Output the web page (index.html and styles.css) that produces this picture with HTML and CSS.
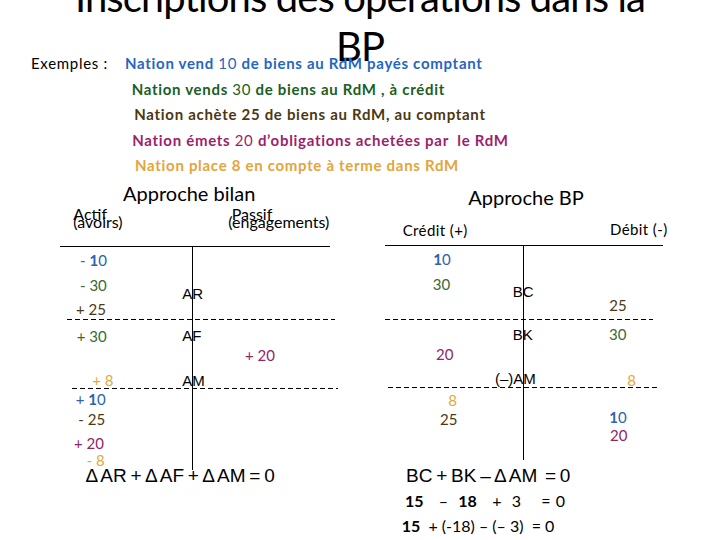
FILE: index.html
```html
<!DOCTYPE html>
<html lang="fr">
<head>
<meta charset="utf-8">
<title>Inscriptions des opérations dans la BP</title>
<link rel="stylesheet" href="styles.css">
</head>
<body>
<div class="slide">
  <h1 class="title">Inscriptions des opérations dans la<br>BP</h1>

  <div class="examples">
    <p class="ex ex--1"><span class="ex-label">Exemples :</span><span class="c-blue">Nation vend <span class="num">10</span> de biens au RdM payés comptant</span></p>
    <p class="ex ex--2 c-green">Nation vends <span class="num">30</span> de biens au RdM , à crédit</p>
    <p class="ex ex--3 c-brown">Nation achète 25 de biens au RdM, au comptant</p>
    <p class="ex ex--4 c-magenta">Nation émets <span class="num">20</span> d’obligations achetées par  le RdM</p>
    <p class="ex ex--5 c-orange">Nation place 8 en compte à terme dans RdM</p>
  </div>

  <div class="board">
    <section class="panel panel--bilan">
      <h2 class="panel-title">Approche bilan</h2>
      <div class="heads heads--bilan">
        <div class="head"><span>Actif</span><span>(avoirs)</span></div>
        <div class="head head--passif"><span class="head-top">Passif</span><span>(engagements)</span></div>
      </div>
      <div class="taccount taccount--bilan">
        <span class="t-item bl-1 t-blue">- <b>1</b>0</span>
        <span class="t-item bl-2 t-green">- 30</span>
        <span class="t-item bl-3 t-brown">+ 25</span>
        <span class="t-label bl-ar">AR</span>
        <span class="dash bl-d1"></span>
        <span class="t-item bl-4 t-green">+ 30</span>
        <span class="t-label bl-af">AF</span>
        <span class="t-item bl-5 t-magenta">+ 20</span>
        <span class="t-item bl-6 t-orange">+ 8</span>
        <span class="t-label bl-am">AM</span>
        <span class="dash bl-d2"></span>
        <span class="t-item bl-7 t-blue">+ <b>1</b>0</span>
        <span class="t-item bl-8 t-brown">- 25</span>
        <span class="t-item bl-9 t-magenta">+ 20</span>
        <span class="t-item bl-10 t-orange">- 8</span>
      </div>
      <p class="eq eq--bilan">∆ AR + ∆ AF + ∆ AM = 0</p>
    </section>

    <section class="panel panel--bp">
      <h2 class="panel-title">Approche BP</h2>
      <div class="heads heads--bp">
        <span>Crédit (+)</span>
        <span class="debit">Débit (-)</span>
      </div>
      <div class="taccount taccount--bp">
        <span class="t-item br-1 t-blue"><b>1</b>0</span>
        <span class="t-item br-2 t-green">30</span>
        <span class="t-label br-bc">BC</span>
        <span class="t-item br-3 t-brown">25</span>
        <span class="dash br-d1"></span>
        <span class="t-label br-bk">BK</span>
        <span class="t-item br-4 t-green">30</span>
        <span class="t-item br-5 t-magenta">20</span>
        <span class="t-label br-am">(–)AM</span>
        <span class="t-item br-6 t-orange">8</span>
        <span class="dash br-d2"></span>
        <span class="t-item br-7 t-orange">8</span>
        <span class="t-item br-8 t-brown">25</span>
        <span class="t-item br-9 t-blue"><b>1</b>0</span>
        <span class="t-item br-10 t-magenta">20</span>
      </div>
      <p class="eq eq--bp">BC + BK – ∆ AM  = 0</p>
      <p class="calc calc--1"><b>15</b>   –  <b>18</b>   +  3    = 0</p>
      <p class="calc calc--2"><b>15</b>  + (-18) – (– 3)  = 0</p>
    </section>
  </div>
</div>
</body>
</html>
```

FILE: styles.css
```css
* {
  box-sizing: border-box;
  margin: 0;
  padding: 0;
}

body {
  margin: 0;
  background: #ffffff;
  font-family: Lato, "Open Sans", sans-serif;
  color: #000;
}

.slide {
  width: 720px;
  height: 540px;
  overflow: hidden;
  position: relative;
  background: #ffffff;
}

/* ---------- title ---------- */
.title {
  font-weight: 400;
  font-size: 40px;
  line-height: 49px;
  text-align: center;
  margin-top: -27px;
  letter-spacing: -0.9px;
  color: #000;
}

/* ---------- examples ---------- */
.examples {
  margin-top: -20px;
  margin-bottom: 1.5px;
  font-size: 15px;
  line-height: 25.5px;
  letter-spacing: 0.7px;
}

.ex {
  font-weight: 700;
  white-space: pre;
}

.ex .num {
  font-weight: 400;
}

.ex-label {
  display: inline-block;
  width: 94px;
  font-weight: 400;
  color: #000;
}

.ex--1 { padding-left: 31px; }
.ex--2 { padding-left: 131.7px; }
.ex--3 { padding-left: 134.3px; }
.ex--4 { padding-left: 132.3px; }
.ex--5 { padding-left: 135px; }

.c-blue { color: #2566c2; }
.c-green { color: #1b5e1f; }
.c-brown { color: #4b3813; }
.c-magenta { color: #9c1f6c; }
.c-orange { color: #e4a53a; }

/* ---------- board ---------- */
.board {
  display: flex;
  gap: 30px;
  padding-left: 60px;
}

.panel {
  display: flex;
  flex-direction: column;
}

.panel--bilan { width: 290px; }
.panel--bp { width: 300px; }

.panel-title {
  font-weight: 400;
  font-size: 20px;
  line-height: 24px;
}

.panel--bilan .panel-title {
  margin-top: 1.3px;
  padding-left: 63px;
}

.panel--bp .panel-title {
  margin-top: 5.3px;
  padding-left: 88.3px;
}

/* headers of the T accounts */
.heads--bilan {
  display: grid;
  grid-template-columns: 155px auto;
  padding-left: 13.3px;
  margin-top: 4.25px;
  font-size: 16px;
  line-height: 8.5px;
}

.head {
  display: flex;
  flex-direction: column;
}

.head-top {
  padding-left: 3.4px;
}

.heads--bp {
  display: grid;
  grid-template-columns: 207.3px auto;
  padding-left: 22.7px;
  margin-top: 11.9px;
  font-size: 15px;
  line-height: 18px;
  letter-spacing: 0.4px;
}

.debit {
  position: relative;
  top: -1px;
}

/* ---------- T accounts (diagram canvas) ---------- */
.taccount {
  position: relative;
}

.taccount::before,
.taccount::after {
  content: "";
  position: absolute;
  background: #000;
}

.taccount::before {
  left: 0;
  top: 0;
  height: 1px;
  width: 100%;
}

.taccount::after {
  top: 0;
  width: 1px;
  height: 100%;
}

.taccount--bilan {
  margin-top: 19.45px;
  width: 270px;
  height: 224px;
}

.taccount--bilan::after { left: 131.7px; }

.taccount--bp {
  margin-top: 5.8px;
  margin-left: 5px;
  width: 278px;
  height: 215px;
}

.taccount--bp::after { left: 137.7px; }

.t-item {
  position: absolute;
  white-space: pre;
  font-size: 15px;
  line-height: 15px;
}

.t-item b { font-weight: 700; }

.t-label {
  position: absolute;
  white-space: pre;
  font-family: "Liberation Sans", Arial, sans-serif;
  font-size: 15px;
  line-height: 15px;
  color: #000;
}

.dash {
  position: absolute;
  height: 1px;
  background: repeating-linear-gradient(to right, #000 0 5px, transparent 5px 8px);
}

.t-blue { color: #2b63ad; }
.t-green { color: #3a6a35; }
.t-brown { color: #4b3914; }
.t-magenta { color: #922468; }
.t-orange { color: #e2a83c; }

/* left account items */
.bl-1 { left: 20px; top: 7.4px; }
.bl-2 { left: 20px; top: 32.4px; }
.bl-3 { left: 16px; top: 55.7px; }
.bl-ar { left: 122.3px; top: 39.6px; }
.bl-d1 { left: 7.3px; top: 73.3px; width: 267.7px; }
.bl-4 { left: 16.7px; top: 83.4px; }
.bl-af { left: 122.3px; top: 82px; }
.bl-5 { left: 185px; top: 102.4px; }
.bl-6 { left: 32.3px; top: 126.7px; }
.bl-am { left: 122.3px; top: 126.6px; }
.bl-d2 { left: 11.7px; top: 142.3px; width: 266.6px; }
.bl-7 { left: 15.7px; top: 145.7px; }
.bl-8 { left: 18.3px; top: 166.4px; }
.bl-9 { left: 14px; top: 190px; }
.bl-10 { left: 26.7px; top: 206.7px; }

/* right account items */
.br-1 { left: 48.3px; top: 6.7px; }
.br-2 { left: 47.7px; top: 32.4px; }
.br-bc { left: 127.7px; top: 39px; }
.br-3 { left: 224.3px; top: 52.7px; }
.br-d1 { left: 0; top: 73.7px; width: 268.3px; }
.br-bk { left: 127.7px; top: 82.3px; }
.br-4 { left: 224px; top: 81.7px; }
.br-5 { left: 51px; top: 102.4px; }
.br-am { left: 110px; top: 126.3px; }
.br-6 { left: 242.3px; top: 127.7px; }
.br-d2 { left: 3.3px; top: 142.3px; width: 269px; }
.br-7 { left: 63.3px; top: 147.7px; }
.br-8 { left: 55px; top: 167.4px; }
.br-9 { left: 224.3px; top: 165px; }
.br-10 { left: 225px; top: 182.7px; }

/* ---------- equations ---------- */
.eq {
  font-family: "Liberation Sans", Arial, "DejaVu Sans", sans-serif;
  font-size: 19px;
  line-height: 20px;
  word-spacing: -1.5px;
  white-space: pre;
  padding-left: 26px;
}

.eq--bilan { margin-top: -3.9px; }
.eq--bp { margin-top: 6.1px; }

.calc {
  font-size: 16px;
  line-height: 25.6px;
  white-space: pre;
}

.calc b { font-weight: 700; }

.calc--1 {
  margin-top: 1.6px;
  padding-left: 25px;
  word-spacing: 1px;
}

.calc--2 {
  padding-left: 21.7px;
}
```
